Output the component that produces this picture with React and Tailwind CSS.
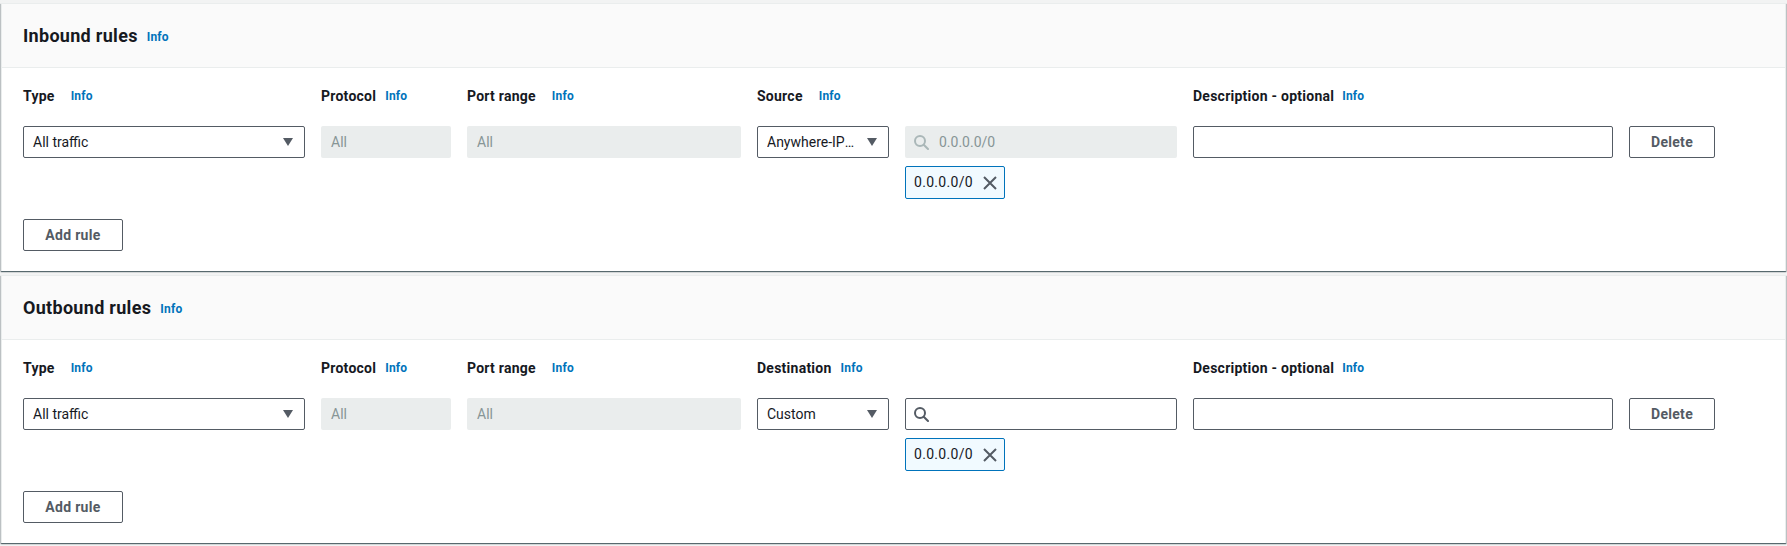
const font = { fontFamily: "Roboto, 'Liberation Sans', sans-serif" };

const Info = ({ className = "" }) => (
  <a className={`text-[12px] font-bold text-[#0073bb] leading-none tracking-[0.2px] ${className}`}>Info</a>
);

const Caret = () => (
  <svg width="10" height="8" viewBox="0 0 10 8" className="shrink-0">
    <path d="M0 0 H10 L5 8 Z" fill="#545b64" />
  </svg>
);

const SearchIcon = ({ color }) => (
  <svg width="15" height="15" viewBox="0 0 15 15" fill="none" className="shrink-0">
    <circle cx="6" cy="6" r="5" stroke={color} strokeWidth="2" />
    <path d="M9.7 9.7 L14 14" stroke={color} strokeWidth="2" strokeLinecap="round" />
  </svg>
);

const CloseIcon = () => (
  <svg width="14" height="14" viewBox="0 0 14 14" fill="none" className="shrink-0">
    <path d="M1 1 L13 13 M13 1 L1 13" stroke="#545b64" strokeWidth="2" />
  </svg>
);

const Label = ({ text, gap }) => (
  <div className="flex items-center h-5">
    <span className="text-[14px] font-bold text-[#16191f] tracking-[0.25px]">{text}</span>
    <Info className={gap} />
  </div>
);

const RulesPanel = ({ title, targetLabel, targetGap, targetValue, disabledSearch }) => (
  <section className="bg-white border border-[#eaeded] border-b-0 shadow-[0_1px_1px_0_rgba(0,28,36,0.5),1px_1px_1px_0_rgba(0,28,36,0.15),-1px_1px_1px_0_rgba(0,28,36,0.15)]">
    {/* Header */}
    <div className="h-16 bg-[#fafafa] border-b border-[#eaeded] flex items-center px-[21px]">
      <h2 className="text-[18px] font-bold text-[#16191f] leading-none tracking-[0.3px]">{title}</h2>
      <Info className="ml-[9px] mt-[3px]" />
    </div>

    <div className="px-[21px] pt-[18px] pb-5">
      <div className="flex gap-4">
        {/* Type */}
        <div className="w-[282px]">
          <Label text="Type" gap="ml-4" />
          <div className="mt-5 h-8 border border-[#545b64] rounded-[2px] flex items-center justify-between pl-[9px] pr-[11px] text-[14px] text-[#16191f]">
            <span>All traffic</span>
            <Caret />
          </div>
        </div>

        {/* Protocol */}
        <div className="w-[130px]">
          <Label text="Protocol" gap="ml-[9px]" />
          <div className="mt-5 h-8 bg-[#eaeded] rounded-[2px] flex items-center pl-[10px] text-[14px] text-[#879596]">
            All
          </div>
        </div>

        {/* Port range */}
        <div className="w-[274px]">
          <Label text="Port range" gap="ml-4" />
          <div className="mt-5 h-8 bg-[#eaeded] rounded-[2px] flex items-center pl-[10px] text-[14px] text-[#879596]">
            All
          </div>
        </div>

        {/* Source / Destination */}
        <div className="w-[420px]">
          <Label text={targetLabel} gap={targetGap} />
          <div className="mt-5 flex gap-4">
            <div className="w-[132px] h-8 border border-[#545b64] rounded-[2px] flex items-center justify-between pl-[9px] pr-[11px] text-[14px] text-[#16191f]">
              <span className="truncate min-w-0 pr-[12px]">{targetValue}</span>
              <Caret />
            </div>
            <div className="w-[272px]">
              {disabledSearch ? (
                <div className="h-8 bg-[#eaeded] rounded-[2px] flex items-center pl-[9px] text-[14px] text-[#879596]">
                  <SearchIcon color="#aab7b8" />
                  <span className="ml-[10px]">0.0.0.0/0</span>
                </div>
              ) : (
                <div className="h-8 border border-[#545b64] rounded-[2px] flex items-center pl-[8px]">
                  <SearchIcon color="#545b64" />
                </div>
              )}
              <div className="mt-2 w-[100px] h-[33px] border border-[#0073bb] bg-[#f1faff] rounded-[2px] flex items-center pl-2 text-[14px] text-[#16191f]">
                <span className="tracking-[0.3px]">0.0.0.0/0</span>
                <span className="ml-[10px]">
                  <CloseIcon />
                </span>
              </div>
            </div>
          </div>
        </div>

        {/* Description */}
        <div className="w-[420px]">
          <Label text="Description - optional" gap="ml-2" />
          <div className="mt-5 h-8 border border-[#545b64] rounded-[2px] bg-white" />
        </div>

        {/* Delete */}
        <div className="w-[86px] pt-10">
          <button className="w-full h-8 border border-[#545b64] rounded-[2px] bg-white text-[14px] font-bold text-[#545b64] tracking-[0.3px]">
            Delete
          </button>
        </div>
      </div>

      <button className="mt-5 w-[100px] h-8 border border-[#545b64] rounded-[2px] bg-white text-[14px] font-bold text-[#545b64] tracking-[0.3px]">
        Add rule
      </button>
    </div>
  </section>
);

export default function App() {
  return (
    <div className="min-h-screen bg-[#f2f3f3] pt-[3px] px-[1px] flex flex-col gap-1" style={font}>
      <RulesPanel
        title="Inbound rules"
        targetLabel="Source"
        targetGap="ml-4"
        targetValue="Anywhere-IPv4"
        disabledSearch
      />
      <RulesPanel
        title="Outbound rules"
        targetLabel="Destination"
        targetGap="ml-[9px]"
        targetValue="Custom"
      />
    </div>
  );
}
